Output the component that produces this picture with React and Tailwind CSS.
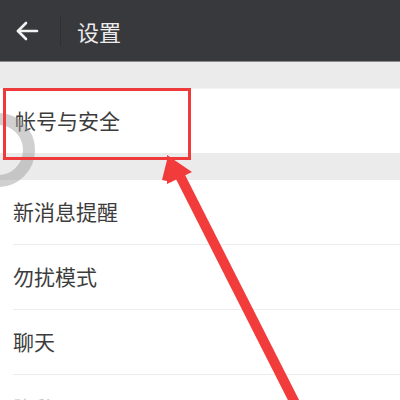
const App = () => {
  const rows = ["新消息提醒", "勿扰模式", "聊天"];

  return (
    <div
      className="relative w-[400px] h-[400px] overflow-hidden bg-white"
      style={{ fontFamily: '"Noto Sans CJK SC", "Noto Sans", sans-serif' }}
    >
      <div className="h-[62px] bg-[#38393d] border-b border-[#8a8a8e] flex items-center">
        <div className="w-[60px] flex justify-center pl-[-4px]">
          <svg width="24" height="20" viewBox="0 0 24 20" fill="none" stroke="#f2f2f2" strokeWidth="2.6" strokeLinecap="round" strokeLinejoin="round" className="ml-[-6px]">
            <path d="M22 10H3" />
            <path d="M11 2L3 10l8 8" />
          </svg>
        </div>
        <div className="w-px h-[30px] bg-[#2e2f33]" />
        <div className="pl-[16px] text-[22px] text-[#ececec] leading-none">设置</div>
      </div>

      <div className="h-[27px] bg-[#ebebeb] border-b border-[#f4f4f4]" />

      <div className="h-[64px] flex items-center pl-[15px] text-[21px] text-[#3c3c3c]">帐号与安全</div>

      <div className="h-[27px] bg-[#ebebeb]" />

      {rows.map((r) => (
        <div key={r} className="pl-[13px]">
          <div className="h-[65px] flex items-center border-b border-[#ececec] text-[21px] text-[#3c3c3c]">{r}</div>
        </div>
      ))}
      <div className="h-[65px] flex items-center pl-[13px] text-[21px] text-[#c4c4c4]">隐私</div>

      <svg className="absolute left-0 top-0" width="400" height="400" viewBox="0 0 400 400">
        <circle cx="-2" cy="150" r="31" fill="none" stroke="rgba(150,150,150,0.45)" strokeWidth="12" />
        <rect x="4.5" y="89.5" width="185" height="69" fill="none" stroke="#ee3a3a" strokeWidth="3" />
        <polygon points="162,180 168,156 172,182" fill="#ee3a3a" />
        <polygon points="167,155 192,172 167,184" fill="#f23c3c" />
        <line x1="178" y1="172" x2="296" y2="405" stroke="#f23c3c" strokeWidth="10" />
      </svg>
    </div>
  );
};

export default App;
